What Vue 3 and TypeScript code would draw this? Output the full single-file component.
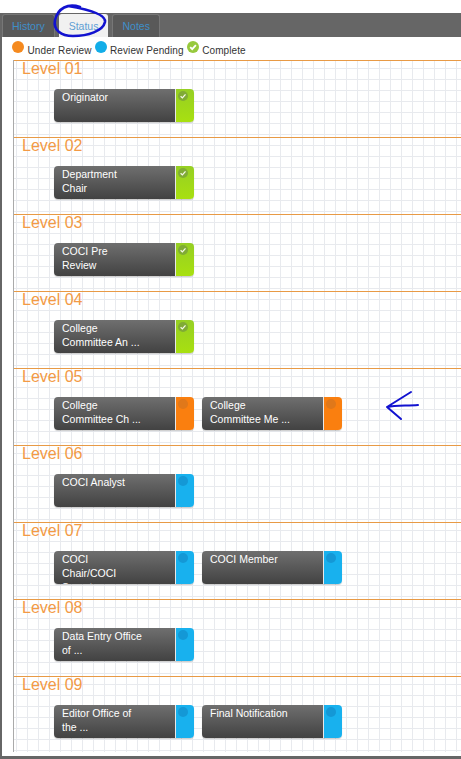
<template>
  <div class="page">
    <div class="tabBar">
      <div v-for="tab in tabs" :key="tab" class="tab" :class="{ active: tab === 'Status' }">{{ tab }}</div>
    </div>
    <div class="panel">
      <div class="legend">
        <span class="legendDot orangeDot"></span><span class="legendText">Under Review</span>
        <span class="legendDot blueDot"></span><span class="legendText">Review Pending</span>
        <span class="legendDot greenDot">
          <svg viewBox="0 0 12 12" width="12" height="12"><path d="M3.2 6.2 5.2 8.2 8.9 4.1" fill="none" stroke="#fff" stroke-width="1.8" /></svg>
        </span><span class="legendText">Complete</span>
      </div>
      <div class="grid">
        <div v-for="level in levels" :key="level.name" class="level">
          <div class="levelName">{{ level.name }}</div>
          <div class="cards">
            <div v-for="card in level.cards" :key="card.label" class="card">
              <div class="cardLabel">
                <div class="cardText">{{ card.label }}</div>
              </div>
              <div class="cardStatus" :class="card.status">
                <span class="statusDot">
                  <svg v-if="card.status === 'complete'" viewBox="0 0 10 10" width="10" height="10"><path d="M2.6 5.2 4.4 6.9 7.5 3.4" fill="none" stroke="#f4f8e6" stroke-width="1.3" /></svg>
                </span>
              </div>
            </div>
          </div>
        </div>
      </div>
    </div>
    <svg class="scribble" width="461" height="759" viewBox="0 0 461 759">
      <path class="thick" d="M80 7C68 3 58 8 55 20 53 30 61 36 73 36 88 36 103 31 105 22 106 15 92 10 68 6" />
      <path d="M411 392 387 407 401 419M387 407C396 405 407 406 418 405" />
    </svg>
  </div>
</template>

<script setup lang="ts">
type Status = 'review' | 'pending' | 'complete';

interface Card {
  label: string;
  status: Status;
}

const tabs = ['History', 'Status', 'Notes'];

const levels: { name: string; cards: Card[] }[] = [
  { name: 'Level 01', cards: [{ label: 'Originator', status: 'complete' }] },
  { name: 'Level 02', cards: [{ label: 'Department Chair', status: 'complete' }] },
  { name: 'Level 03', cards: [{ label: 'COCI Pre Review', status: 'complete' }] },
  { name: 'Level 04', cards: [{ label: 'College Committee An ...', status: 'complete' }] },
  {
    name: 'Level 05',
    cards: [
      { label: 'College Committee Ch ...', status: 'review' },
      { label: 'College Committee Me ...', status: 'review' },
    ],
  },
  { name: 'Level 06', cards: [{ label: 'COCI Analyst', status: 'pending' }] },
  {
    name: 'Level 07',
    cards: [
      { label: 'COCI Chair/COCI Secretary', status: 'pending' },
      { label: 'COCI Member', status: 'pending' },
    ],
  },
  { name: 'Level 08', cards: [{ label: 'Data Entry Office of ...', status: 'pending' }] },
  {
    name: 'Level 09',
    cards: [
      { label: 'Editor Office of the ...', status: 'pending' },
      { label: 'Final Notification', status: 'pending' },
    ],
  },
];
</script>

<style scoped>
.page {
  position: relative;
  width: 461px;
  height: 759px;
  overflow: hidden;
  background: #fff;
  font-family: 'Liberation Sans', Arial, sans-serif;
}

.tabBar {
  display: flex;
  gap: 4px;
  margin-top: 13px;
  height: 24px;
  padding-left: 2px;
  background: #666;
  align-items: flex-end;
}

.tab {
  height: 23px;
  padding: 0 9px;
  line-height: 22px;
  font-size: 10.5px;
  color: #3f8fc9;
  background: #595959;
  border-radius: 3px 3px 0 0;
  border: 1px solid #777;
  border-bottom: 0;
  box-sizing: border-box;
}

.tab.active {
  background: #f1f1f1;
  color: #5f9fd4;
  border-color: #f1f1f1;
}

.panel {
  height: 722px;
  box-sizing: border-box;
  border-left: 2px solid #666;
  border-bottom: 3px solid #666;
}

.legend {
  display: flex;
  align-items: center;
  height: 23px;
  padding-left: 10px;
}

.legendDot {
  width: 12px;
  height: 12px;
  border-radius: 50%;
  margin-top: -4px;
  flex-shrink: 0;
}

.orangeDot {
  background: #f58a1f;
}

.blueDot {
  background: #12ade8;
  margin-left: 3px;
}

.greenDot {
  background: #97c93d;
  margin-left: 3px;
}

.legendDot svg {
  display: block;
}

.legendText {
  margin-left: 3.5px;
  margin-top: 3px;
  font-size: 10px;
  color: #333;
  letter-spacing: 0.1px;
}

.grid {
  height: 692px;
  margin-left: 11px;
  overflow: hidden;
  border-left: 1px solid #aaa;
  background-color: #fff;
  background-image:
    linear-gradient(#e8eaee 1px, transparent 1px),
    linear-gradient(90deg, #e8eaee 1px, transparent 1px);
  background-size: 11px 11px;
  background-position: 2px 8px;
}

.level {
  height: 77px;
  box-sizing: border-box;
  border-top: 1px solid #e89a45;
}

.levelName {
  height: 28px;
  padding-left: 8px;
  font-size: 16px;
  line-height: 16px;
  color: #f39a45;
}

.cards {
  display: flex;
  gap: 8px;
  padding-left: 40px;
}

.card {
  display: flex;
  width: 140px;
  height: 33px;
  overflow: hidden;
  border-radius: 4px;
  box-shadow: 0 1px 1px rgba(0, 0, 0, 0.2);
}

.cardLabel {
  width: 122px;
  flex-shrink: 0;
  box-sizing: border-box;
  padding: 1px 32px 0 8px;
  overflow: hidden;
  background: linear-gradient(#6f6f6f, #424242);
  border-right: 1px solid #e8e8e8;
}

.cardText {
  font-size: 10.5px;
  line-height: 14px;
  color: #fff;
}

.cardStatus {
  flex: 1;
  padding: 2px 0 0 2px;
}

.statusDot {
  display: block;
  width: 10px;
  height: 10px;
  border-radius: 50%;
}

.statusDot svg {
  display: block;
}

.complete {
  background: linear-gradient(#96cf24, #a8e010);
}

.complete .statusDot {
  background: #80ab35;
}

.review {
  background: #fa7f0f;
}

.review .statusDot {
  background: #e0781a;
}

.pending {
  background: #18b1ee;
}

.pending .statusDot {
  background: #1498d6;
}

.scribble {
  position: absolute;
  top: 0;
  left: 0;
  pointer-events: none;
}

.scribble path {
  fill: none;
  stroke: #1212d0;
  stroke-width: 2;
  stroke-linecap: round;
  stroke-linejoin: round;
}

.scribble .thick {
  stroke-width: 2.6;
}
</style>
